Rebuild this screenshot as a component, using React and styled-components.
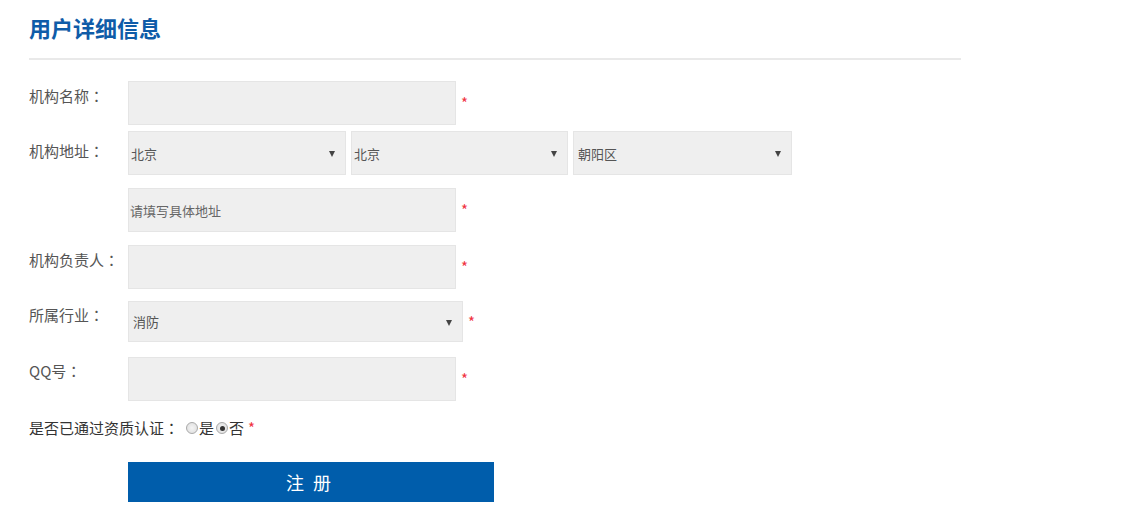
import styled, { createGlobalStyle } from 'styled-components';

const GlobalStyle = createGlobalStyle`
  body {
    margin: 0;
    background: #fff;
    font-family: "Microsoft YaHei", "Noto Sans CJK SC", sans-serif;
  }
`;

const Page = styled.div`
  width: 932px;
  padding-left: 29px;
`;

const Title = styled.h2`
  margin: 0;
  padding: 12px 0 16px 0;
  font-size: 22px;
  line-height: 30px;
  font-weight: bold;
  color: #0f5ca8;
  border-bottom: 2px solid #e9e9e9;
`;

const Form = styled.form`
  padding-top: 21px;
`;

const Row = styled.div`
  display: flex;
  align-items: flex-start;
  margin-top: ${(p) => p.gap || 0}px;
`;

const Label = styled.label`
  width: 99px;
  flex-shrink: 0;
  padding-top: ${(p) => p.top ?? 5}px;
  font-size: 15px;
  line-height: 20px;
  color: #555;
  white-space: nowrap;
`;

// centred full-width colon, as in the original font
const Colon = styled.span`
  font-family: "Noto Sans CJK JP", sans-serif;
`;

const Field = styled.div`
  display: flex;
  align-items: center;
`;

const Input = styled.input`
  box-sizing: border-box;
  width: 328px;
  height: 44px;
  padding: 0 1px;
  margin: 0;
  background: #efefef;
  border: 1px solid #e5e5e5;
  outline: none;
  font-family: inherit;
  font-size: 13px;
  color: #555;
  &::placeholder {
    color: #666;
  }
`;

const SelectWrap = styled.div`
  position: relative;
  width: ${(p) => p.w}px;
  height: ${(p) => p.h || 44}px;
  &::after {
    content: '';
    position: absolute;
    right: 11px;
    top: 50%;
    margin-top: -2px;
    border-left: 3.5px solid transparent;
    border-right: 3.5px solid transparent;
    border-top: 6px solid #444;
    pointer-events: none;
  }
`;

const Select = styled.select`
  box-sizing: border-box;
  appearance: none;
  -webkit-appearance: none;
  width: 100%;
  height: 100%;
  margin: 0;
  padding: 0 0 0 ${(p) => p.pad || 2}px;
  background: #efefef;
  border: 1px solid #e5e5e5;
  border-radius: 0;
  outline: none;
  font-family: inherit;
  font-size: 13px;
  color: #555;
`;

const Selects = styled.div`
  display: flex;
  gap: 5px;
`;

const Star = styled.span`
  margin-left: ${(p) => p.ml || 5}px;
  color: #f0333f;
  font-size: 15px;
  line-height: 14px;
`;

const RadioRow = styled.div`
  display: flex;
  align-items: center;
  margin-top: 17px;
  font-size: 15px;
  line-height: 20px;
  color: #333;
`;

const Radio = styled.input`
  appearance: none;
  -webkit-appearance: none;
  box-sizing: border-box;
  width: 12px;
  height: 12px;
  margin: 0 1px 0 ${(p) => p.ml || 0}px;
  border-radius: 50%;
  border: 1px solid #a9a9a9;
  background: radial-gradient(circle, #f4f4f4 0%, #dcdcdc 100%);
  position: relative;
  &:checked::after {
    content: '';
    position: absolute;
    left: 2.5px;
    top: 2.5px;
    width: 5px;
    height: 5px;
    border-radius: 50%;
    background: #333;
  }
`;

const Button = styled.button`
  display: block;
  width: 366px;
  height: 40px;
  margin: 24px 0 0 99px;
  background: #005dab;
  border: none;
  color: #fff;
  font-family: inherit;
  font-size: 18px;
  letter-spacing: 9px;
  padding-left: 10px;
`;

export default function App() {
  return (
    <>
      <GlobalStyle />
      <Page>
        <Title>用户详细信息</Title>
        <Form onSubmit={(e) => e.preventDefault()}>
          <Row>
            <Label>机构名称<Colon>：</Colon></Label>
            <Field>
              <Input />
              <Star>*</Star>
            </Field>
          </Row>
          <Row gap={6}>
            <Label top={10}>机构地址<Colon>：</Colon></Label>
            <Selects>
              <SelectWrap w={218}>
                <Select defaultValue="北京">
                  <option>北京</option>
                </Select>
              </SelectWrap>
              <SelectWrap w={217}>
                <Select defaultValue="北京">
                  <option>北京</option>
                </Select>
              </SelectWrap>
              <SelectWrap w={219}>
                <Select defaultValue="朝阳区" pad={4}>
                  <option>朝阳区</option>
                </Select>
              </SelectWrap>
            </Selects>
          </Row>
          <Row gap={13}>
            <Label />
            <Field>
              <Input placeholder="请填写具体地址" />
              <Star>*</Star>
            </Field>
          </Row>
          <Row gap={13}>
            <Label>机构负责人<Colon>：</Colon></Label>
            <Field>
              <Input />
              <Star>*</Star>
            </Field>
          </Row>
          <Row gap={12}>
            <Label top={4}>所属行业<Colon>：</Colon></Label>
            <Field>
              <SelectWrap w={335} h={41}>
                <Select defaultValue="消防" pad={4}>
                  <option>消防</option>
                </Select>
              </SelectWrap>
              <Star ml={5}>*</Star>
            </Field>
          </Row>
          <Row gap={15}>
            <Label top={4}>QQ号<Colon>：</Colon></Label>
            <Field>
              <Input />
              <Star>*</Star>
            </Field>
          </Row>
          <RadioRow>
            是否已通过资质认证<Colon>：</Colon>
            <Radio type="radio" name="cert" ml={7} />
            是
            <Radio type="radio" name="cert" defaultChecked ml={2} />
            否
            <Star ml={4}>*</Star>
          </RadioRow>
          <Button type="submit">注册</Button>
        </Form>
      </Page>
    </>
  );
}
